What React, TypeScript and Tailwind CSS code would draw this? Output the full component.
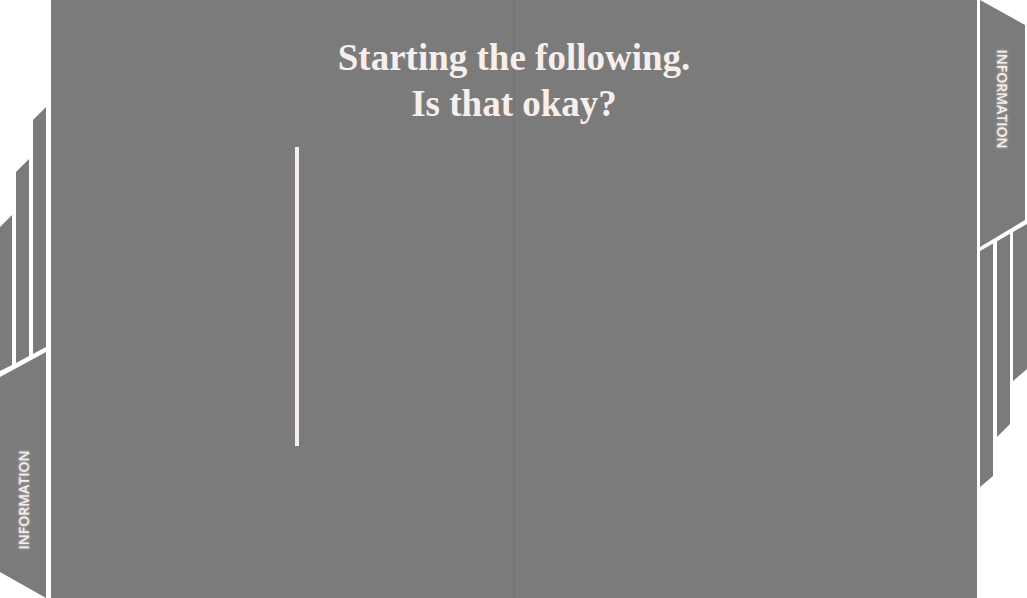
const GRAY = "#7b7b7b";

function LeftTabs() {
  return (
    <div className="relative h-full w-[51px] shrink-0">
      <svg width="51" height="598" viewBox="0 0 51 598" className="block">
        <polygon points="0,227 12,215 12,365 0,371" fill={GRAY} />
        <polygon points="16,172 29,159 29,356 16,363" fill={GRAY} />
        <polygon points="33,120 46,107 46,347 33,354" fill={GRAY} />
        <polygon points="0,377 46,352 46,598 0,572" fill={GRAY} />
      </svg>
      <span className="absolute left-[24px] top-[500px] -translate-x-1/2 -translate-y-1/2 -rotate-90 whitespace-nowrap font-['Open_Sans',sans-serif] text-[14px] font-semibold leading-none text-[#f5eeeb] [text-shadow:0_0_3px_rgba(255,255,255,0.6)]">
        INFORMATION
      </span>
    </div>
  );
}

function RightTabs() {
  return (
    <div className="relative h-full w-[50px] shrink-0">
      <svg width="50" height="598" viewBox="0 0 50 598" className="block">
        <polygon points="3,0 48,25 48,220 3,247" fill={GRAY} />
        <polygon points="3,251 16,243.5 16,476 3,487" fill={GRAY} />
        <polygon points="20,241.2 33,233.8 33,424 20,437" fill={GRAY} />
        <polygon points="36,232.1 50,224 50,369 36,381" fill={GRAY} />
      </svg>
      <span className="absolute left-[25px] top-[99px] -translate-x-1/2 -translate-y-1/2 rotate-90 whitespace-nowrap font-['Open_Sans',sans-serif] text-[14px] font-semibold leading-none text-[#f5eeeb] [text-shadow:0_0_3px_rgba(255,255,255,0.6)]">
        INFORMATION
      </span>
    </div>
  );
}

export default function App() {
  return (
    <div className="flex h-[598px] w-full overflow-hidden bg-white">
      <LeftTabs />
      <main className="relative flex-1 bg-[#7b7b7b]">
        {/* center divider */}
        <div className="absolute inset-y-0 left-1/2 w-[1px] -translate-x-1/2 bg-[#717171]" />
        <div className="relative flex flex-col">
          <h1 className="pt-[35px] text-center font-['Liberation_Serif',serif] text-[37px] font-bold leading-[46px] text-[#f8eeeb]">
            Starting the following.
            <br />
            Is that okay?
          </h1>
          <div className="ml-[244px] mt-[20px] h-[299px] w-[4px] bg-[#f8eeeb]" />
        </div>
      </main>
      <RightTabs />
    </div>
  );
}
